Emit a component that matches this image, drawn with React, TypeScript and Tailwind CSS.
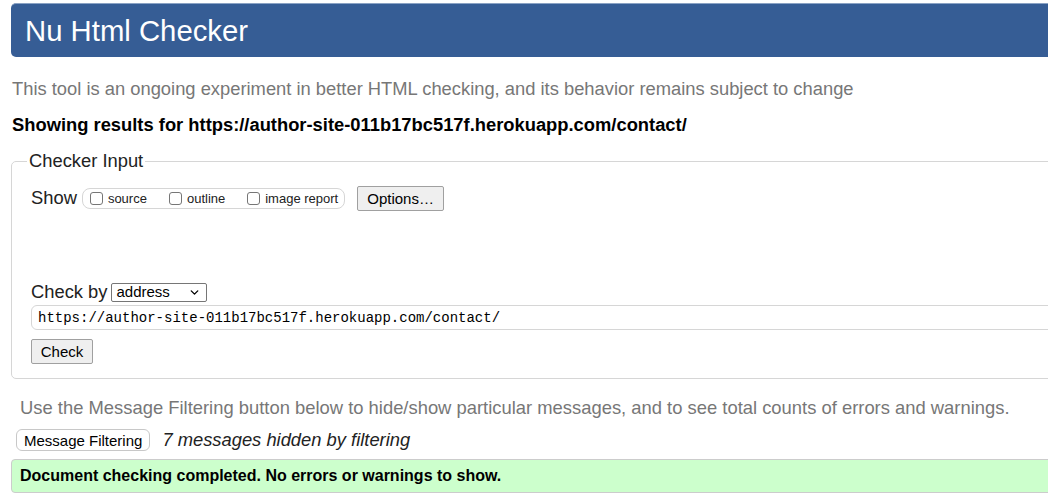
import { ChevronDown } from 'lucide-react';

function Checkbox({ label }: { label: string }) {
  return (
    <label className="inline-flex items-center gap-[5px] mr-[22px] last:mr-0">
      <span className="w-[13px] h-[13px] border border-[#767676] rounded-[3px] bg-white" />
      <span className="text-[13px] text-[#222]">{label}</span>
    </label>
  );
}

export default function App() {
  return (
    <div className="w-[1048px] h-[500px] overflow-hidden bg-white text-[#222] leading-[22px] font-['Liberation_Sans',Arial,sans-serif]">
      <div className="pl-[11px] pt-[3px]">
        <header className="h-[54px] -mr-4 rounded-[5px] bg-[#365d95] border-t border-[#8aa2c4] flex items-center pl-[14px]">
          <h1 className="text-[29.3px] text-white leading-none">Nu Html Checker</h1>
        </header>

        <p className="mt-[21px] text-[18.35px] text-[#777] pl-px">
          This tool is an ongoing experiment in better HTML checking, and its behavior remains subject to change
        </p>
        <p className="mt-[14px] text-[18.35px] font-bold text-black pl-px">
          Showing results for https://author-site-011b17bc517f.herokuapp.com/contact/
        </p>

        <fieldset className="mt-[14px] -mr-4 border border-[#d6d6d6] rounded-[5px] pl-[19px] pb-[14px]">
          <legend className="-ml-[4px] px-[2px] text-[18.35px] text-[#222]">Checker Input</legend>

          <div className="flex items-center mt-[14px] h-[25px]">
            <span className="text-[18.35px] mr-[5px] -mt-[2px]">Show</span>
            <span className="inline-flex items-center h-[21px] border border-[#d6d6d6] rounded-[8px] pl-[7px] pr-[6px]">
              <Checkbox label="source" />
              <Checkbox label="outline" />
              <Checkbox label="image report" />
            </span>
            <button className="ml-[12px] h-[25px] px-[9px] border border-[#a0a0a0] rounded-[2px] bg-[#efefef] text-[15px] text-black">
              Options…
            </button>
          </div>

          <div className="flex items-center mt-[70px] h-[22px]">
            <span className="text-[18.35px] mr-[4px]">Check by</span>
            <span className="inline-flex items-center justify-between w-[96px] h-[19px] border border-[#767676] rounded-[2px] pl-[4px] pr-[5px] text-[15px] text-black">
              address
              <ChevronDown size={13} strokeWidth={2.5} />
            </span>
          </div>

          <div className="mt-[2px] h-[25px] border border-[#d6d6d6] rounded-l-[6px] flex items-center pl-[6px] font-['Liberation_Mono',Consolas,monospace] text-[14px] text-black">
            https://author-site-011b17bc517f.herokuapp.com/contact/
          </div>

          <button className="mt-[9px] h-[25px] w-[62px] border border-[#a0a0a0] rounded-[2px] bg-[#efefef] text-[15px] text-black">
            Check
          </button>
        </fieldset>

        <p className="mt-[18px] pl-[9px] text-[18.4px] text-[#777]">
          Use the Message Filtering button below to hide/show particular messages, and to see total counts of errors and warnings.
        </p>

        <div className="flex items-center mt-[10px] h-[22px] pl-[5px]">
          <button className="h-[22px] px-[7px] border border-[#c8c8c8] rounded-[6px] bg-white text-[15px] text-black">
            Message Filtering
          </button>
          <span className="ml-[12px] text-[18.35px] italic text-[#222]">7 messages hidden by filtering</span>
        </div>

        <div className="mt-[8px] -mr-4 h-[34px] bg-[#ccffcc] border border-[#cccccc] rounded-l-[4px] flex items-center pl-[8px]">
          <span className="text-[16px] font-bold text-black">Document checking completed. No errors or warnings to show.</span>
        </div>
      </div>
    </div>
  );
}
